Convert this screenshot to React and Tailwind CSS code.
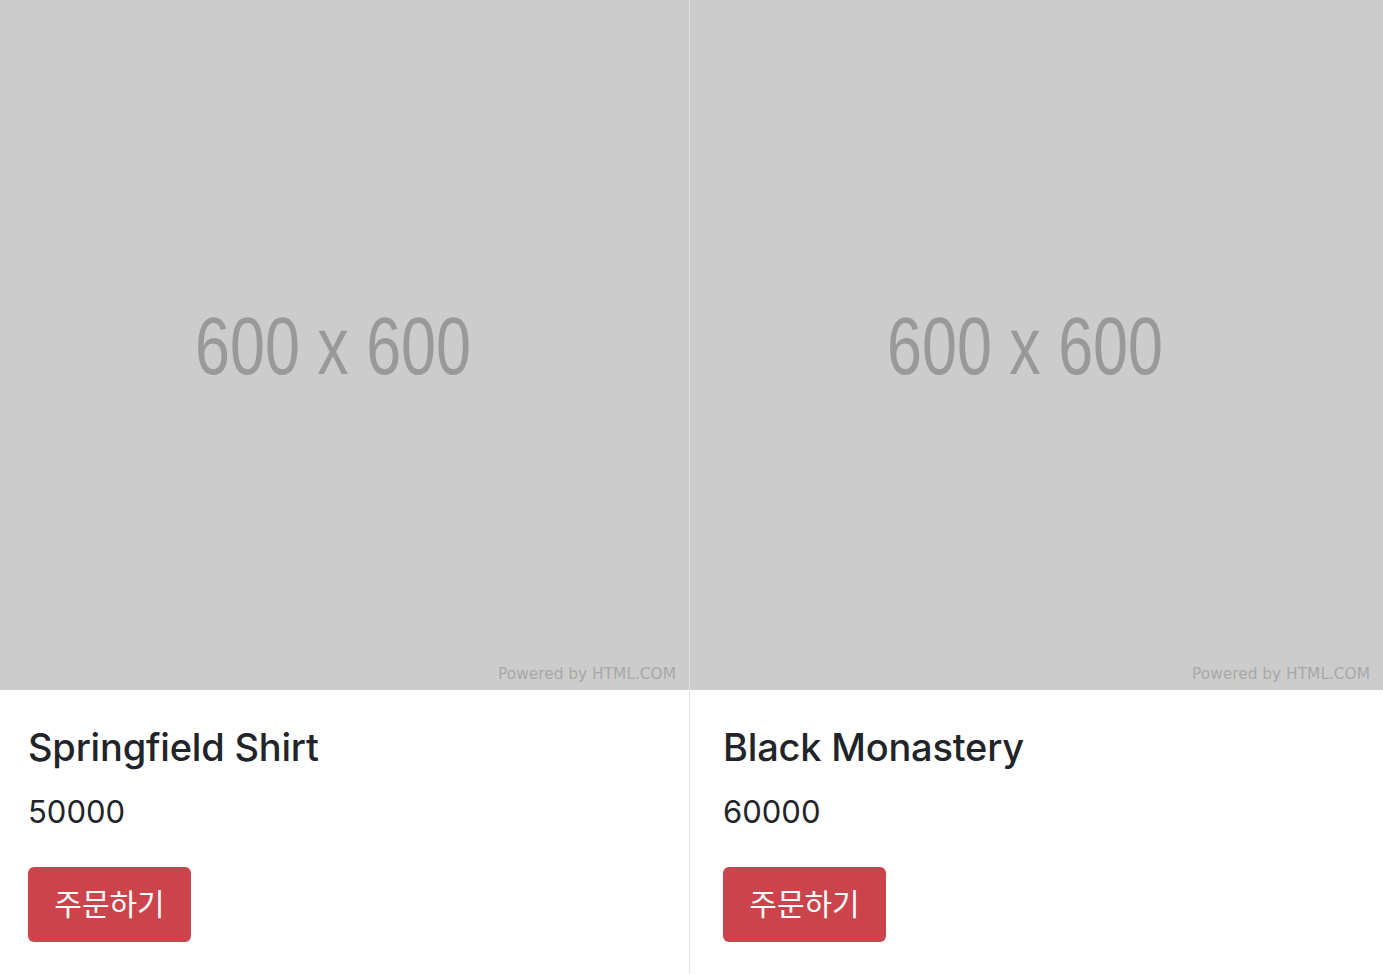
import React from "react";

const products = [
  { id: 1, name: "Springfield Shirt", price: 50000, width: "w-[689px]", pad: "pl-[28px]" },
  { id: 2, name: "Black Monastery", price: 60000, width: "flex-1 border-l border-[#dee2e6]", pad: "pl-[33px]" },
];

// placeholder image, drawn like the 600x600 dummy picture
const Placeholder = () => (
  <div className="relative h-[690px] bg-[#cccccc] flex items-center justify-center">
    <svg width="370" height="70" overflow="visible" className="mr-[24px]">
      <text
        x="185"
        y="64"
        textAnchor="middle"
        textLength="276"
        lengthAdjust="spacingAndGlyphs"
        fill="#999999"
        fontSize="81"
        fontFamily="'Liberation Sans', Arial, sans-serif"
      >
        600 x 600
      </text>
    </svg>
    <svg width="180" height="20" className="absolute right-[12px] bottom-[5px]">
      <text
        x="1"
        y="14"
        textLength="178"
        lengthAdjust="spacingAndGlyphs"
        fill="#a8a8a8"
        fontSize="15"
        fontFamily="'DejaVu Sans', sans-serif"
      >
        Powered by HTML.COM
      </text>
    </svg>
  </div>
);

const ProductCard = ({ product }) => (
  <div className={`${product.width} flex flex-col`}>
    <Placeholder />
    <div className={`${product.pad} pr-[28px] pt-[35px] pb-[32px]`}>
      <h2 className="text-[38px] leading-[1.2] font-medium text-[#212529] tracking-[-0.2px]">
        {product.name}
      </h2>
      <p className="mt-[19px] text-[31px] leading-[1.45] text-[#212529]">{product.price}</p>
      <button className="mt-[32px] h-[75px] w-[163px] flex items-center justify-center rounded-[6px] bg-[#cb444b] text-white text-[30px]">
        주문하기
      </button>
    </div>
  </div>
);

export default function App() {
  return (
    <div
      className="min-h-screen bg-white flex"
      style={{ fontFamily: "Inter, 'Noto Sans CJK KR', sans-serif" }}
    >
      {products.map((p) => (
        <ProductCard key={p.id} product={p} />
      ))}
    </div>
  );
}
